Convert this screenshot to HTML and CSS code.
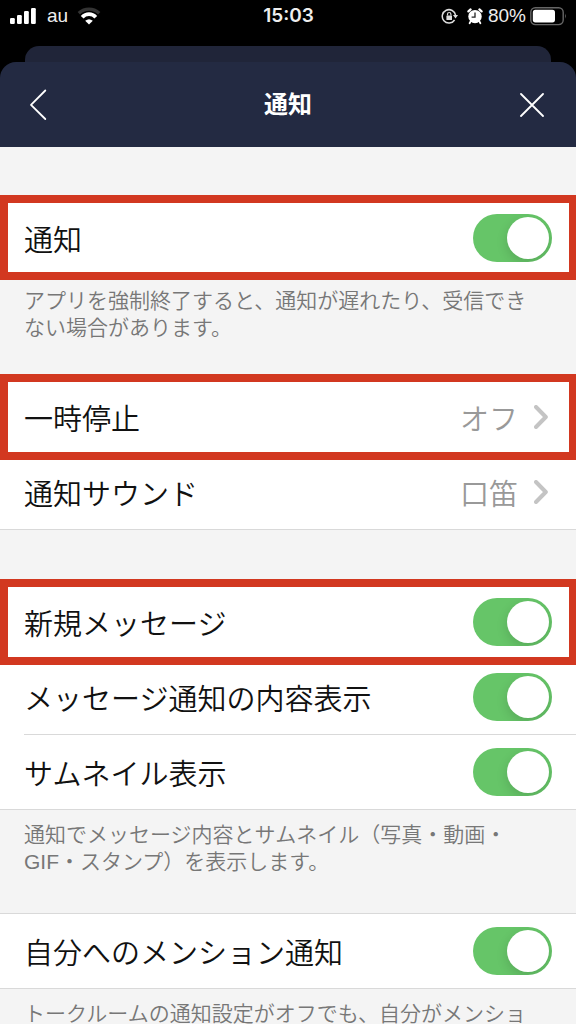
FILE: index.html
```html
<!DOCTYPE html>
<html lang="ja">
<head>
<meta charset="utf-8">
<meta name="viewport" content="width=device-width, initial-scale=1">
<title>通知</title>
<link rel="stylesheet" href="styles.css">
</head>
<body>
<div class="screen">
  <div class="status">
    <div class="status-left">
      <svg width="26" height="18" viewBox="0 0 26 18" fill="#fff" aria-hidden="true">
        <rect x="0" y="11" width="4.8" height="6" rx="1.2"/>
        <rect x="7" y="8" width="4.8" height="9" rx="1.2"/>
        <rect x="14" y="4" width="4.8" height="13" rx="1.2"/>
        <rect x="21" y="1" width="4.8" height="16" rx="1.2"/>
      </svg>
      <span class="carrier">au</span>
      <svg width="24" height="18" viewBox="0 0 24 18" fill="none" aria-hidden="true">
        <path d="M1.8 6.2C7.8.8 16.2.8 22.2 6.2" stroke="#333" stroke-width="3.4"/>
        <path d="M5.200 10.200C9 6.200 15 6.200 18.800 10.200" stroke="#fff" stroke-width="3.800"/>
        <path d="M12 17.400 8.200 13.800Q12 10.800 15.800 13.800Z" fill="#fff"/>
      </svg>
    </div>
    <time class="clock">15:03</time>
    <div class="status-right">
      <svg class="lock" width="17" height="17" viewBox="0 0 17 17" fill="none" aria-hidden="true">
        <path d="M13.600 12A6.700 6.700 0 1 1 14.600 7.400" stroke="#ddd" stroke-width="1.500"/>
        <path d="M12 7H17L14.500 10.400Z" fill="#ddd"/>
        <rect x="5.400" y="7.400" width="5.600" height="4.600" rx=".6" fill="#ddd"/>
        <path d="M6.500 7.600V6.200a1.700 1.700 0 0 1 3.400 0v1.400" stroke="#ddd" stroke-width="1.200"/>
      </svg>
      <svg width="16" height="17" viewBox="0 0 16 17" fill="none" aria-hidden="true">
        <circle cx="8" cy="8.600" r="6.700" fill="#fff"/>
        <path d="M1.400 3.400 3.600 1.400M14.600 3.400 12.400 1.400" stroke="#fff" stroke-width="2.200" stroke-linecap="round"/>
        <path d="m3.600 13.400-1 1.800M12.400 13.400l1 1.800" stroke="#fff" stroke-width="1.800" stroke-linecap="round"/>
        <path d="M8 4.600V9.200H4.600" stroke="#222" stroke-width="1.300"/>
      </svg>
      <span class="charge">80%</span>
      <svg width="37" height="19" viewBox="0 0 37 19" fill="none" aria-hidden="true">
        <rect x=".8" y=".8" width="32.400" height="16.800" rx="4.500" stroke="#666" stroke-width="1.400"/>
        <rect x="2.800" y="2.800" width="22.200" height="12.600" rx="2.600" fill="#fff"/>
        <path d="M35 6.600q1.800 2.600 0 5.200Z" fill="#666"/>
      </svg>
    </div>
  </div>

  <div class="sheet-behind"></div>
  <header class="header">
    <button class="icon-button" type="button" aria-label="戻る">
      <svg width="20" height="32" viewBox="0 0 20 32" fill="none" stroke="#fff" stroke-width="1.800" stroke-linecap="round" stroke-linejoin="round"><path d="M17.300 1.500 3 15.800 17.300 30"/></svg>
    </button>
    <h1 class="title">通知</h1>
    <button class="icon-button icon-button-end" type="button" aria-label="閉じる">
      <svg width="24" height="24" viewBox="0 0 24 24" fill="none" stroke="#fff" stroke-width="1.800" stroke-linecap="round"><path d="m1 1 22 22M23 1 1 23"/></svg>
    </button>
  </header>

  <main class="settings">
    <section class="group">
      <div class="row highlight"><label class="row-body" for="all">通知<input class="switch" id="all" type="checkbox" role="switch" checked></label></div>
    </section>
    <p class="note">アプリを強制終了すると、通知が遅れたり、受信できない場合があります。</p>

    <section class="group">
      <div class="row highlight">
        <a class="row-body" href="#pause">一時停止<span class="value">オフ<svg class="chevron" width="14" height="24" viewBox="0 0 14 24"><path d="m2 2 9.800 10L2 22"/></svg></span></a>
      </div>
      <div class="row">
        <a class="row-body" href="#sound">通知サウンド<span class="value">口笛<svg class="chevron" width="14" height="24" viewBox="0 0 14 24"><path d="m2 2 9.800 10L2 22"/></svg></span></a>
      </div>
    </section>

    <section class="group group-spaced">
      <div class="row highlight"><label class="row-body" for="new">新規メッセージ<input class="switch" id="new" type="checkbox" role="switch" checked></label></div>
      <div class="row"><label class="row-body" for="content">メッセージ通知の内容表示<input class="switch" id="content" type="checkbox" role="switch" checked></label></div>
      <div class="row"><label class="row-body" for="thumb">サムネイル表示<input class="switch" id="thumb" type="checkbox" role="switch" checked></label></div>
    </section>
    <p class="note">通知でメッセージ内容とサムネイル（写真・動画・GIF・スタンプ）を表示します。</p>

    <section class="group">
      <div class="row"><label class="row-body" for="mention">自分へのメンション通知<input class="switch" id="mention" type="checkbox" role="switch" checked></label></div>
    </section>
    <p class="note">トークルームの通知設定がオフでも、自分がメンショ</p>
  </main>
</div>
</body>
</html>
```

FILE: styles.css
```css
* {
  box-sizing: border-box;
}

body {
  margin: 0;
  background: #000;
  color: #111;
  font-family: "Liberation Sans", "Noto Sans CJK JP", sans-serif;
}

.screen {
  display: flex;
  flex-direction: column;
  height: 100vh;
  overflow: hidden;
}

.status {
  display: grid;
  grid-template-columns: 1fr auto 1fr;
  align-items: center;
  flex: none;
  height: 46px;
  padding: 0 9px 14px 10px;
  color: #eee;
  font-family: Inter, sans-serif;
  font-size: 19px;
  line-height: 24px;
}

.status-left,
.status-right {
  display: flex;
  align-items: center;
}

.status-left {
  gap: 9px;
}

.status-right {
  justify-content: flex-end;
  gap: 4px;
}

.lock {
  margin-right: 5px;
}

.carrier,
.charge {
  font-family: "Liberation Sans", sans-serif;
  font-size: 19px;
}

.carrier {
  margin-left: 2px;
}

.charge {
  margin-left: 1px;
}

.clock {
  font-weight: 600;
}

.sheet-behind {
  flex: none;
  height: 32px;
  margin: 0 25px -16px;
  border-radius: 14px 14px 0 0;
  background: #202539;
}

.header {
  display: grid;
  grid-template-columns: 1fr auto 1fr;
  align-items: center;
  flex: none;
  height: 85px;
  padding: 0 28px;
  border-radius: 16px 16px 0 0;
  background: #232a42;
  color: #fff;
  position: relative;
}

.title {
  margin: 0;
  font-size: 24px;
  font-weight: 700;
  line-height: 32px;
}

.icon-button {
  display: flex;
  justify-self: start;
  padding: 0;
  border: 0;
  background: none;
}

.icon-button-end {
  justify-self: end;
  margin-right: 4px;
}

.settings {
  flex: 1;
  padding-top: 54px;
  overflow-y: auto;
  scrollbar-width: none;
  background: #f4f4f4;
}

.group {
  background: #fff;
  box-shadow: 0 -1px #d9d9d9;
}

.group-spaced {
  margin-top: 55px;
}

.row {
  position: relative;
  height: 75px;
  padding-left: 24px;
}

.row-body {
  display: flex;
  align-items: center;
  justify-content: space-between;
  height: 100%;
  padding-right: 24px;
  border-bottom: 1px solid #d9d9d9;
  color: inherit;
  font-family: "Noto Sans CJK JP", sans-serif;
  font-size: 29px;
  font-weight: 350;
  line-height: 40px;
  text-decoration: none;
}

.row:last-child {
  border-bottom: 1px solid #d9d9d9;
}

.row:last-child .row-body {
  border-bottom: 0;
}

/* Red frame laid over the row and its neighbours' edges */
.highlight::after {
  content: "";
  position: absolute;
  z-index: 1;
  inset: -6px 0 -5px;
  border: 8px solid #d23820;
  border-right-width: 7px;
  pointer-events: none;
}

.value {
  display: flex;
  align-items: center;
  gap: 16px;
  padding-right: 4px;
  color: #999;
}

.chevron {
  fill: none;
  stroke: #c4c4c4;
  stroke-width: 4;
  stroke-linecap: round;
  stroke-linejoin: round;
}

.switch {
  appearance: none;
  display: flex;
  align-items: center;
  width: 79px;
  height: 48px;
  margin: 0;
  padding: 3px;
  overflow: hidden;
  border-radius: 24px;
  background: #ddd;
}

.switch::before {
  content: "";
  width: 42px;
  height: 42px;
  border-radius: 50%;
  background: #fff;
  box-shadow: 0 4px 12px rgb(0 0 0 / 14%);
}

.switch:checked {
  justify-content: flex-end;
  background: #66c568;
}

.note {
  margin: 0;
  padding: 11px 40px 39px 24px;
  color: #777;
  font-size: 21px;
  font-weight: 350;
  line-height: 27px;
}
```
